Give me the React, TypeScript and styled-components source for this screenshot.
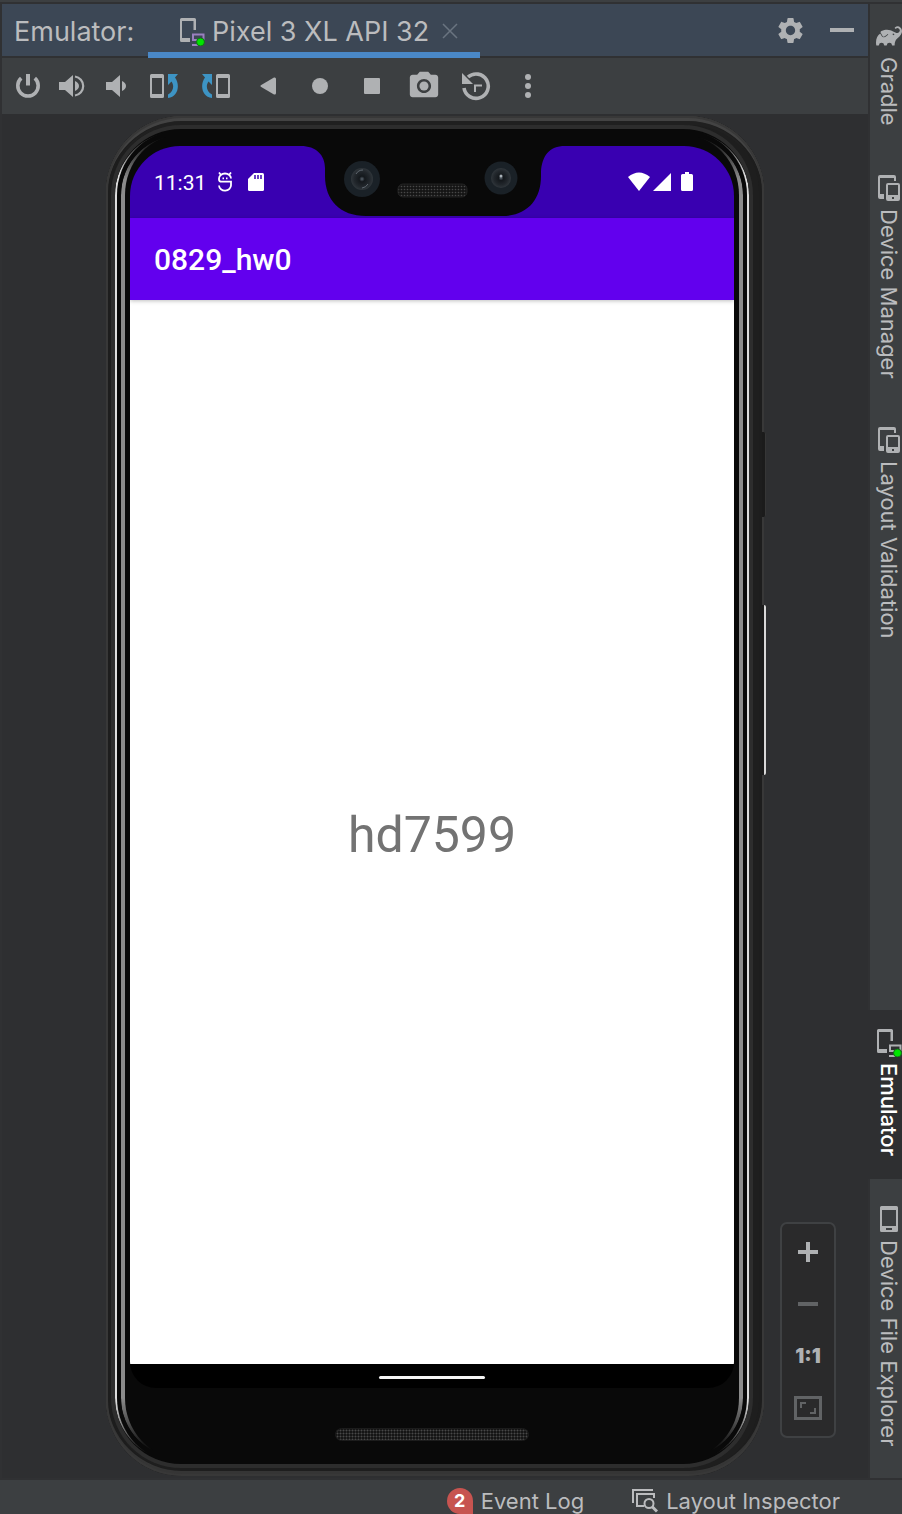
import React from 'react';
import styled, { createGlobalStyle } from 'styled-components';
import { SiGradle } from 'react-icons/si';
import { MdSettings, MdPhotoCamera } from 'react-icons/md';

const color = {
  bar: '#3c3f41',
  header: '#3c4755',
  canvas: '#2e2f31',
  line: '#303133',
  text: '#bbbcbe',
  icon: '#afb1b3',
  dim: '#616365',
  accent: '#4a88c7',
  blue: '#3d94c4',
  green: '#00e600',
};

const GlobalStyle = createGlobalStyle`
  *, *::before, *::after { box-sizing: border-box; }
  html, body { margin: 0; background: ${color.bar}; }
  body { font-family: Inter, "Liberation Sans", sans-serif; color: ${color.text}; }
  button { border: 0; padding: 0; background: none; color: inherit; font: inherit; cursor: pointer; }
  svg { display: block; flex: none; }
`;

const Window = styled.div`
  display: flex;
  flex-direction: column;
  min-height: 100vh;
  border-top: 2px solid ${color.bar};
  overflow: hidden;
`;

const Workspace = styled.div`
  display: flex;
  flex: 1;
  border-top: 2px solid ${color.line};
`;

const Panel = styled.section`
  display: flex;
  flex: 1;
  flex-direction: column;
  min-width: 0;
  border-left: 2px solid ${color.line};
  border-right: 2px solid ${color.line};
  margin-right: -2px;
`;

const PanelHeader = styled.header`
  display: flex;
  align-items: stretch;
  height: 54px;
  background: ${color.header};
  border-bottom: 2px solid ${color.line};
  font-size: 27px;
`;

const PanelTitle = styled.h1`
  display: flex;
  align-items: center;
  width: 146px;
  height: 54px;
  margin: 0;
  padding: 0 0 0 12px;
  font-size: inherit;
  font-weight: 400;
`;

const Tab = styled.div`
  display: flex;
  align-items: center;
  gap: 6px;
  width: 332px;
  height: 54px;
  padding: 0 22px 0 30px;
  box-shadow: inset 0 -6px 0 ${color.accent};
  white-space: nowrap;
`;

const TabLabel = styled.span`
  flex: 1;
`;

const HeaderActions = styled.div`
  display: flex;
  flex: 1;
  justify-content: flex-end;
`;

const IconButton = styled.button<{ $width?: number; $dim?: boolean }>`
  display: flex;
  align-items: center;
  justify-content: center;
  width: ${(p) => p.$width ?? 52}px;
  height: 52px;
  color: ${(p) => (p.$dim ? color.dim : color.icon)};
`;

const Toolbar = styled.div`
  display: flex;
  align-items: center;
  height: 56px;
  padding-left: 4px;
  background: ${color.bar};
`;

const Canvas = styled.main`
  position: relative;
  display: flex;
  flex: 1;
  justify-content: center;
  padding: 2px 0;
  background: ${color.canvas};
`;

const Phone = styled.div`
  position: relative;
  display: flex;
  width: 658px;
  max-width: 100%;
  padding: 13px 15px 12px 9px;
  border-radius: 76px;
  background: #1e1e1e;
  box-shadow:
    inset 0 0 0 2px #383838,
    inset 0 4px 0 1px #434343,
    inset 0 -4px 0 1px #353535,
    inset 0 0 0 5px #1d1d1d,
    inset 0 9px 0 0 #202020;
`;

const Face = styled.div`
  position: relative;
  display: flex;
  flex: 1;
  flex-direction: column;
  min-width: 0;
  padding: 17px 15px 0;
  border-radius: 66px;
  background: #090909;
  box-shadow: 0 0 0 4px #2d2d2d;

  &::before,
  &::after {
    content: '';
    position: absolute;
    pointer-events: none;
    mask-image: linear-gradient(transparent 2px, #000 44px, #000 calc(100% - 60px), transparent calc(100% - 8px));
  }
  &::before {
    inset: 2px 0;
    border: solid #dcdcdc;
    border-width: 0 2px;
    border-radius: 64px;
  }
  &::after {
    inset: 6px 6px;
    border: solid #8b8b8b;
    border-width: 0 4px;
    border-radius: 60px;
  }
`;

const Screen = styled.div`
  position: relative;
  z-index: 1;
  display: flex;
  flex: 1;
  flex-direction: column;
  border-radius: 50px 50px 26px 26px;
  font-family: Roboto, sans-serif;
  overflow: hidden;
`;

const StatusBar = styled.div`
  display: flex;
  align-items: center;
  height: 72px;
  padding: 0 40px 0 24px;
  background: #3900b1;
  color: #fff;
  font-size: 21px;
`;

const StatusGroup = styled.div`
  display: flex;
  flex: 1;
  align-items: center;
  gap: 14px;
`;

const StatusIcons = styled.div`
  display: flex;
  align-items: center;
  gap: 16px;
`;

const StatusTime = styled.span`
  width: 50px;
  padding-top: 1px;
  white-space: nowrap;
`;

const Notch = styled.svg`
  position: absolute;
  top: 0;
  left: 50%;
  margin-left: -131px;
`;

const AppBar = styled.div`
  position: relative;
  display: flex;
  align-items: center;
  height: 82px;
  padding: 0 24px;
  background: #6200ee;
  box-shadow: 0 1px 4px rgba(0, 0, 0, 0.25);
  color: #fff;
  font-size: 30px;
  font-weight: 500;
`;

const AppBody = styled.div`
  display: flex;
  flex: 1;
  align-items: center;
  justify-content: center;
  padding-top: 6px;
  background: #fff;
  color: #737373;
  font-size: 50px;
`;

const NavBar = styled.div`
  display: flex;
  align-items: center;
  justify-content: center;
  height: 24px;
  padding-top: 2px;
  background: #000;
`;

const NavPill = styled.span`
  width: 106px;
  height: 3px;
  border-radius: 2px;
  background: #f4f4f4;
`;

const Chin = styled.div`
  display: flex;
  justify-content: center;
  height: 76px;
  padding-top: 40px;
`;

const Speaker = styled.span`
  width: 194px;
  height: 13px;
  border-radius: 7px;
  border: 1px solid #1c1c1c;
  background: radial-gradient(#484848 28%, #151515 60%) 0 0 / 3px 3px;
`;

const SideKey = styled.span<{ $top: number; $height: number; $lit?: boolean }>`
  position: absolute;
  top: ${(p) => p.$top}px;
  right: -2px;
  width: 4px;
  height: ${(p) => p.$height}px;
  border-radius: 0 2px 2px 0;
  background: #1b1b1b;
  border-right: ${(p) => (p.$lit ? '2px solid #d8d8d8' : '1px solid #363636')};
`;

const ZoomPanel = styled.div`
  position: absolute;
  right: 32px;
  bottom: 40px;
  width: 56px;
  padding: 2px 0;
  border: 2px solid #3f4143;
  border-radius: 7px;
  background: #2a2a2b;
`;

const ActualSize = styled.span`
  font-size: 20px;
  font-weight: 900;
`;

const Rail = styled.nav`
  display: flex;
  flex-direction: column;
  justify-content: space-between;
  width: 34px;
  padding-bottom: 10px;
  border-left: 2px solid ${color.line};
  background: ${color.bar};
`;

const RailGroup = styled.div`
  display: flex;
  flex-direction: column;
  gap: 8px;
`;

const RailButton = styled.button<{ $active?: boolean }>`
  display: flex;
  flex-direction: column;
  align-items: center;
  gap: 7px;
  width: 38px;
  margin-left: -2px;
  padding: 18px 0 22px 4px;
  background: ${(p) => (p.$active ? color.canvas : 'none')};
  color: ${(p) => (p.$active ? '#fff' : color.text)};
  font-size: 22px;
  font-weight: ${(p) => (p.$active ? 500 : 400)};
`;

const RailIcon = styled.span`
  display: flex;
  align-items: center;
  height: 28px;
  color: ${color.icon};
`;

const RailLabel = styled.span`
  writing-mode: vertical-rl;
  line-height: 26px;
  white-space: nowrap;
`;

const Footer = styled.footer`
  display: flex;
  align-items: center;
  justify-content: flex-end;
  gap: 48px;
  height: 36px;
  padding: 8px 62px 0 0;
  border-top: 2px solid ${color.line};
  background: ${color.bar};
  font-size: 22px;
`;

const FooterButton = styled.button`
  display: flex;
  align-items: center;
  gap: 8px;
  white-space: nowrap;
`;

const Badge = styled.span`
  width: 26px;
  height: 26px;
  border-radius: 13px 13px 0 13px;
  background: #c75450;
  color: #fff;
  font-size: 18px;
  font-weight: 700;
  line-height: 26px;
  text-align: center;
`;

const EmulatorIcon = ({ screen = color.icon }: { screen?: string }) => (
  <svg width="28" height="30" viewBox="0 0 28 30" fill="none">
    <path d="M2 3.500Q2 2 3.500 2H16.500Q18 2 18 3.500V14H15.500V5H4V22H12V26H3.500Q2 26 2 24.500Z" fill={color.icon} />
    <path d="M15 24V18.500H25.500V24M14 24H20M14 29H20" stroke={screen} strokeWidth="2" />
    <circle cx="22.500" cy="26" r="4" fill={color.green} stroke="#176b1c" />
  </svg>
);

const DevicesIcon = () => (
  <svg width="22" height="26" viewBox="0 0 22 26" fill="currentColor">
    <path d="M0 2Q0 0 2 0H16Q18 0 18 2V6H16V3H2V19H6V24H2Q0 24 0 22Z" />
    <path
      fillRule="evenodd"
      d="M10 8H20Q22 8 22 10V24Q22 26 20 26H10Q8 26 8 24V10Q8 8 10 8ZM10 10V20H20V10ZM14 22V24H16V22Z"
    />
  </svg>
);

const PhoneIcon = () => (
  <svg width="18" height="26" viewBox="0 0 18 26" fill="currentColor">
    <path
      fillRule="evenodd"
      d="M1.500 0H16.500Q18 0 18 1.500V24.500Q18 26 16.500 26H1.500Q0 26 0 24.500V1.500Q0 0 1.500 0ZM2 4V20H16V4ZM6 22V24H12V22Z"
    />
  </svg>
);

const PowerIcon = () => (
  <svg width="26" height="26" viewBox="0 0 26 26" fill="none" stroke="currentColor">
    <path d="M6.200 5.200A10.200 10.200 0 1 0 19.800 5.200" strokeWidth="3.600" />
    <path d="M13 1V12.500" strokeWidth="4" />
  </svg>
);

const VolumeIcon = ({ loud }: { loud?: boolean }) => (
  <svg width={loud ? 26 : 20} height="24" viewBox={loud ? '0 0 26 24' : '0 0 20 24'} fill="none">
    <path d="M0 8H6L14 1V23L6 16H0Z" fill="currentColor" />
    <path d="M16 7Q20 9 20 12T16 17Z" fill="currentColor" />
    {loud && <path d="M16 2.500A9.600 9.600 0 0 1 16 21.500" stroke="currentColor" strokeWidth="2.200" />}
  </svg>
);

const RotateIcon = ({ right }: { right?: boolean }) => (
  <svg width="30" height="26" viewBox="0 0 30 26" fill="none">
    <g transform={right ? 'matrix(-1 0 0 1 30 0)' : undefined}>
      <path
        fillRule="evenodd"
        d="M2.500 1H13.500Q15 1 15 2.500V23.500Q15 25 13.500 25H2.500Q1 25 1 23.500V2.500Q1 1 2.500 1ZM3 5V21H13V5Z"
        fill="currentColor"
      />
      <path d="M19 1H29L26 4.500C31.500 12 29 24 19 25V21.500C24.500 19 25.500 12.500 22.500 8.500L19 12Z" fill={color.blue} />
    </g>
  </svg>
);

const HistoryIcon = () => (
  <svg width="30" height="30" viewBox="0 0 30 30" fill="none">
    <path d="M3 17A12.200 12.200 0 1 0 7 6" stroke="currentColor" strokeWidth="3.600" />
    <path d="M1 2V13H12Z" fill="currentColor" />
    <path d="M14 21V14.500H21" stroke="currentColor" strokeWidth="2" />
  </svg>
);

const InspectorIcon = () => (
  <svg width="26" height="26" viewBox="0 0 26 26" fill="none" stroke="currentColor" strokeWidth="2">
    <path d="M1 15V2H21M5 6V18H12M4 6H22V10" />
    <circle cx="17" cy="15.500" r="4.500" />
    <path d="M20 18.500L25 23.500" strokeWidth="3" />
  </svg>
);

const DebugIcon = () => (
  <svg width="14" height="20" viewBox="0 0 14 20" fill="none" stroke="#fff" strokeWidth="1.800">
    <path d="M1 0.500L3 3M13 0.500L11 3" />
    <path d="M13 6.500A6 5 0 0 0 1 6.500V7.500Q1 9.700 3.500 9.700H13V13A6 5.300 0 0 1 1 13.500" />
    <path d="M4.500 6.300H6M8 6.300H9.500" />
  </svg>
);

const SdIcon = () => (
  <svg width="16" height="20" viewBox="0 0 16 20">
    <path d="M6 1H14.500Q16 1 16 2.500V17.500Q16 19 14.500 19H1.500Q0 19 0 17.500V7Z" fill="#fff" />
    <path d="M7 3V7M10 3V7M13 3V7" stroke="#3900b1" strokeWidth="1.500" />
  </svg>
);

const SignalIcons = () => (
  <svg width="66" height="20" viewBox="0 0 66 20" fill="#fff">
    <path d="M0 5Q11 -4 22 5L11 19Z" />
    <path d="M25 19H43V1Z" />
    <path d="M57 0H61V2H63.500Q65 2 65 3.500V17.500Q65 19 63.500 19H54.500Q53 19 53 17.500V3.500Q53 2 54.500 2H57Z" />
  </svg>
);

const CameraNotch = () => (
  <Notch width="264" height="71" viewBox="0 0 264 71" aria-hidden="true">
    <defs>
      <radialGradient id="lens">
        <stop offset="0" stopColor="#59636d" />
        <stop offset="0.250" stopColor="#14181c" />
        <stop offset="0.700" stopColor="#22272c" />
        <stop offset="1" stopColor="#30363b" />
      </radialGradient>
      <pattern id="mesh" width="3" height="3" patternUnits="userSpaceOnUse">
        <rect width="3" height="3" fill="#151515" />
        <circle cx="1.500" cy="1.500" r="0.800" fill="#484848" />
      </pattern>
    </defs>
    <path d="M0 0C15 0 24 9 24 22V30C24 54 39 70 65 70H201C226 70 240 54 240 30V26C241 10 248 0 264 0Z" fill="#090909" />
    <circle cx="61" cy="33" r="18" fill="#1a2127" />
    <circle cx="61" cy="33" r="11" fill="url(#lens)" />
    <path d="M55 28A8 8 0 0 1 62 24M67 38A8 8 0 0 1 61 42" stroke="#606870" fill="none" />
    <circle cx="200" cy="32" r="16.500" fill="#1a2127" />
    <circle cx="200" cy="32" r="10" fill="url(#lens)" />
    <circle cx="200" cy="30" r="1.500" fill="#aab2b8" />
    <rect x="97" y="38" width="69" height="13" rx="5" fill="url(#mesh)" stroke="#222" />
  </Notch>
);

const upperTools = [
  { label: 'Gradle', icon: <SiGradle size={26} /> },
  { label: 'Device Manager', icon: <DevicesIcon /> },
  { label: 'Layout Validation', icon: <DevicesIcon /> },
];

const lowerTools = [
  { label: 'Emulator', icon: <EmulatorIcon />, active: true },
  { label: 'Device File Explorer', icon: <PhoneIcon /> },
];

export default function App() {
  return (
    <>
      <GlobalStyle />
      <Window>
        <Workspace>
          <Panel>
            <PanelHeader>
              <PanelTitle>Emulator:</PanelTitle>
              <Tab>
                <EmulatorIcon screen="#9a7fc0" />
                <TabLabel>Pixel 3 XL API 32</TabLabel>
                <button aria-label="Close tab">
                  <svg width="16" height="16" viewBox="0 0 16 16" stroke="#6a7480" strokeWidth="1.500">
                    <path d="M1 1L15 15M15 1L1 15" />
                  </svg>
                </button>
              </Tab>
              <HeaderActions>
                <IconButton aria-label="Settings"><MdSettings size={31} /></IconButton>
                <IconButton aria-label="Hide">
                  <svg width="24" height="4" fill="currentColor"><rect width="24" height="4" /></svg>
                </IconButton>
              </HeaderActions>
            </PanelHeader>
            <Toolbar role="toolbar" aria-label="Device controls">
              <IconButton $width={44} aria-label="Power"><PowerIcon /></IconButton>
              <IconButton $width={44} aria-label="Volume up"><VolumeIcon loud /></IconButton>
              <IconButton $width={44} aria-label="Volume down"><VolumeIcon /></IconButton>
              <IconButton aria-label="Rotate left"><RotateIcon /></IconButton>
              <IconButton aria-label="Rotate right"><RotateIcon right /></IconButton>
              <IconButton aria-label="Back">
                <svg width="16" height="18" viewBox="0 0 16 18" fill="currentColor">
                  <path d="M0.800 8.200L14 0.500Q16 0 16 2V16Q16 18 14 17.500L0.800 9.800Q0 9 0.800 8.200Z" />
                </svg>
              </IconButton>
              <IconButton aria-label="Home">
                <svg width="16" height="16" fill="currentColor"><circle cx="8" cy="8" r="8" /></svg>
              </IconButton>
              <IconButton aria-label="Overview">
                <svg width="16" height="16" fill="currentColor"><rect width="16" height="16" rx="1" /></svg>
              </IconButton>
              <IconButton aria-label="Take screenshot"><MdPhotoCamera size={34} /></IconButton>
              <IconButton aria-label="Snapshots"><HistoryIcon /></IconButton>
              <IconButton aria-label="More">
                <svg width="6" height="24" fill="currentColor">
                  <circle cx="3" cy="3" r="3" />
                  <circle cx="3" cy="12" r="3" />
                  <circle cx="3" cy="21" r="3" />
                </svg>
              </IconButton>
            </Toolbar>
            <Canvas>
              <Phone>
                <SideKey $top={316} $height={85} />
                <SideKey $top={489} $height={170} $lit />
                <Face>
                  <Screen>
                    <StatusBar>
                      <StatusGroup>
                        <StatusTime>11:31</StatusTime>
                        <StatusIcons>
                          <DebugIcon />
                          <SdIcon />
                        </StatusIcons>
                      </StatusGroup>
                      <StatusIcons><SignalIcons /></StatusIcons>
                      <CameraNotch />
                    </StatusBar>
                    <AppBar>0829_hw0</AppBar>
                    <AppBody>hd7599</AppBody>
                    <NavBar><NavPill /></NavBar>
                  </Screen>
                  <Chin><Speaker /></Chin>
                </Face>
              </Phone>
              <ZoomPanel>
                <IconButton aria-label="Zoom in">
                  <svg width="20" height="20" stroke="currentColor" strokeWidth="4"><path d="M10 0V20M0 10H20" /></svg>
                </IconButton>
                <IconButton $dim aria-label="Zoom out">
                  <svg width="20" height="4" fill="currentColor"><rect width="20" height="4" /></svg>
                </IconButton>
                <IconButton aria-label="Actual size"><ActualSize>1:1</ActualSize></IconButton>
                <IconButton $dim aria-label="Zoom to fit">
                  <svg width="28" height="24" fill="none" stroke="currentColor">
                    <rect x="1.500" y="1.500" width="25" height="21" strokeWidth="3" />
                    <path d="M7 12V7H12M16 17H21V12" strokeWidth="2" />
                  </svg>
                </IconButton>
              </ZoomPanel>
            </Canvas>
          </Panel>
          <Rail aria-label="Tool windows">
            <RailGroup>
              {upperTools.map((t) => (
                <RailButton key={t.label}>
                  <RailIcon>{t.icon}</RailIcon>
                  <RailLabel>{t.label}</RailLabel>
                </RailButton>
              ))}
            </RailGroup>
            <RailGroup>
              {lowerTools.map((t) => (
                <RailButton key={t.label} $active={t.active}>
                  <RailIcon>{t.icon}</RailIcon>
                  <RailLabel>{t.label}</RailLabel>
                </RailButton>
              ))}
            </RailGroup>
          </Rail>
        </Workspace>
        <Footer>
          <FooterButton><Badge>2</Badge>Event Log</FooterButton>
          <FooterButton><InspectorIcon />Layout Inspector</FooterButton>
        </Footer>
      </Window>
    </>
  );
}
